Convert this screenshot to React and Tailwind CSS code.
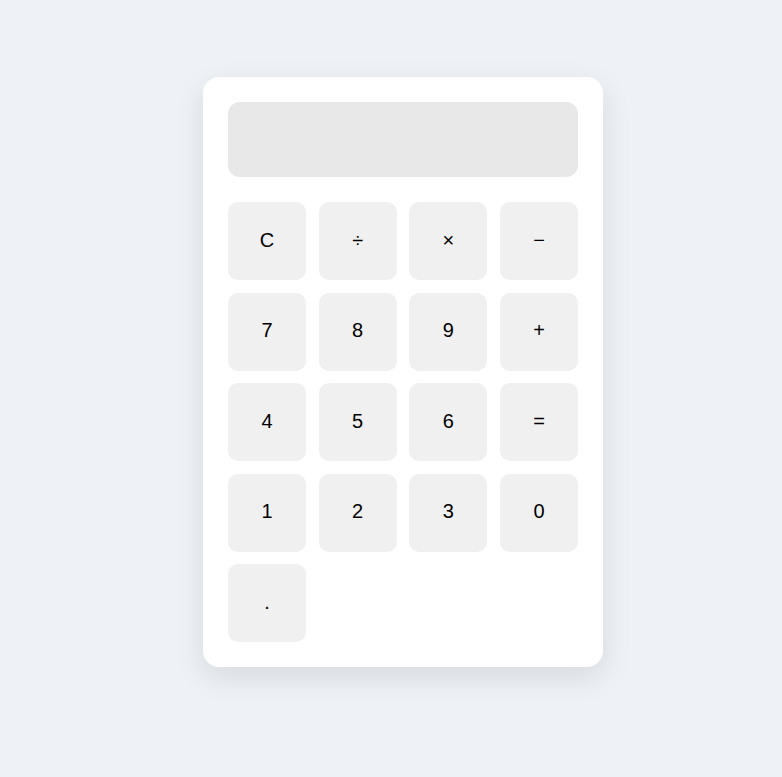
const keys = ["C", "÷", "×", "−", "7", "8", "9", "+", "4", "5", "6", "=", "1", "2", "3", "0", "."];

export default function App() {
  return (
    <div
      className="min-h-screen w-full bg-[#eef2f7] pt-[77px] pl-[203px]"
      style={{ fontFamily: '"Liberation Sans", Arial, sans-serif' }}
    >
      <div className="w-[400px] rounded-[16px] bg-white p-[25px] shadow-[0_10px_30px_rgba(0,0,0,0.1)]">
        <div className="h-[75px] w-full rounded-[12px] bg-[#e8e8e8]" />
        <div className="mt-[25px] grid grid-cols-4 gap-x-[12.8px] gap-y-[12.5px]">
          {keys.map((k) => (
            <button
              key={k}
              className="flex h-[78px] items-center justify-center rounded-[10px] bg-[#f0f0f0] pb-[3px] text-[20px] text-black"
            >
              {k}
            </button>
          ))}
        </div>
      </div>
    </div>
  );
}
